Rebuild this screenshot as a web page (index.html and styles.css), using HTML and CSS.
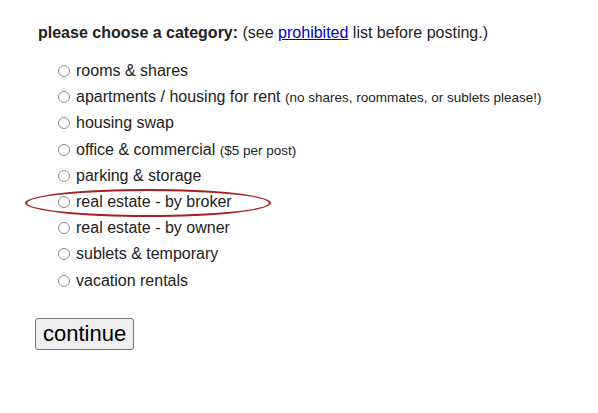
FILE: index.html
```html
<!DOCTYPE html>
<html lang="en">
<head>
  <meta charset="UTF-8" />
  <title>choose a category</title>
  <link rel="stylesheet" href="styles.css">
</head>
<body>
  <form class="picker">
    <div class="prompt">
      <b>please choose a category:</b> (see <a href="#">prohibited</a> list before posting.)
    </div>

    <div class="choices">
      <label><input type="radio" name="cat">rooms &amp; shares</label>
      <label><input type="radio" name="cat">apartments / housing for rent <small>(no shares, roommates, or sublets please!)</small></label>
      <label><input type="radio" name="cat">housing swap</label>
      <label><input type="radio" name="cat">office &amp; commercial <small>($5 per post)</small></label>
      <label><input type="radio" name="cat">parking &amp; storage</label>
      <label class="marked"><input type="radio" name="cat">real estate - by broker</label>
      <label><input type="radio" name="cat">real estate - by owner</label>
      <label><input type="radio" name="cat">sublets &amp; temporary</label>
      <label><input type="radio" name="cat">vacation rentals</label>
    </div>

    <button type="button" class="go">continue</button>
  </form>
</body>
</html>
```

FILE: styles.css
```css
body {
  margin: 0;
  background: #fff;
  color: #222;
  font-family: 'Liberation Sans', Arial, sans-serif;
}

.picker {
  padding: 24px 0 0 38px;
}

.prompt {
  font-size: 16px;
  line-height: 18px;
  margin-bottom: 16px;
}

.prompt a {
  color: #0000cc;
}

.choices {
  display: flex;
  flex-direction: column;
  padding-left: 20px;
}

.choices label {
  display: block;
  height: 26.2px;
  line-height: 26px;
  font-size: 16px;
  white-space: nowrap;
}

.choices small {
  font-size: 13.5px;
}

.choices input {
  appearance: none;
  -webkit-appearance: none;
  display: inline-block;
  vertical-align: -1px;
  margin: 0 6px 0 0;
  width: 12px;
  height: 12px;
  border: 1px solid #8d8d8d;
  border-radius: 50%;
  background: #fff;
}

/* red hand-drawn style circle around the broker option */
.marked {
  position: relative;
}

.marked::after {
  content: "";
  position: absolute;
  left: -33px;
  top: 0;
  width: 242px;
  height: 24px;
  border: 2px solid #a5201f;
  border-radius: 50%;
}

.go {
  margin: 24px 0 0 -3px;
  padding: 2px 7px 2px;
  font-family: 'Liberation Sans', Arial, sans-serif;
  font-size: 22px;
  color: #000;
  background: #efefef;
  border: 1px solid #767676;
  border-radius: 3px;
}
```
